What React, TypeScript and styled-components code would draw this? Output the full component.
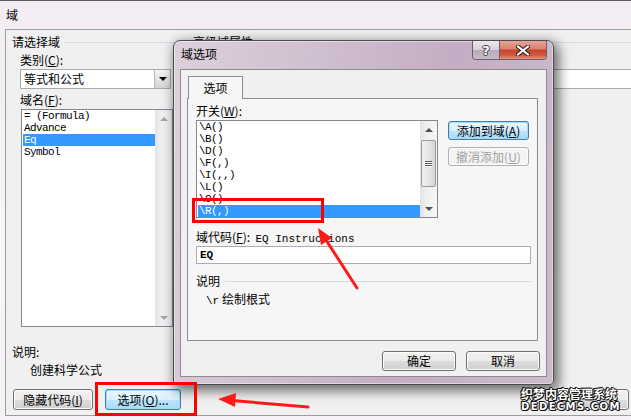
import React from "react";
import styled, { createGlobalStyle } from "styled-components";

const GlobalStyle = createGlobalStyle`
  html, body {
    margin: 0;
    padding: 0;
  }
  body {
    background: #f6eff5;
    font-family: "Noto Sans CJK SC", "Liberation Sans", sans-serif;
    font-size: 12px;
    color: #000;
  }
`;

const Screen = styled.div`
  position: relative;
  width: 631px;
  height: 420px;
  overflow: hidden;
  box-sizing: border-box;
  border-top: 1px solid #5e5e5e;
  background: linear-gradient(180deg, #f3ecf2 0%, #faf5f9 60%, #f7f0f6 100%);
`;

const MainTitle = styled.div`
  height: 28px;
  display: flex;
  align-items: center;
  padding-left: 6px;
  line-height: 14px;
`;

const MainClient = styled.div`
  margin-left: 5px;
  width: 625px;
  height: 385px;
  border: 1px solid #9d9d9d;
  border-right: none;
  background: #f0f0f0;
  display: flex;
  flex-direction: column;
`;

const Columns = styled.div`
  display: flex;
`;

const LeftColumn = styled.div`
  width: 181px;
  box-sizing: border-box;
  padding: 5px 0 0 6px;
  display: flex;
  flex-direction: column;
  align-items: flex-start;
`;

const RightColumn = styled.div`
  flex: 1;
  padding: 5px 0 0 6px;
  display: flex;
  flex-direction: column;
`;

const GroupHeading = styled.div<{ $trail?: number }>`
  align-self: stretch;
  display: flex;
  align-items: center;
  gap: 5px;
  height: 14px;
  line-height: 14px;
  margin-right: ${(p) => p.$trail ?? 0}px;
  white-space: nowrap;
`;

const Rule = styled.span`
  flex: 1;
  height: 1px;
  background: #d0dde6;
`;

const FieldLabel = styled.div`
  margin: 4px 0 0 8px;
  height: 14px;
  line-height: 14px;
`;

const Combo = styled.div`
  margin: 2px 0 0 8px;
  width: 151px;
  height: 20px;
  box-sizing: border-box;
  border: 1px solid #a7abb2;
  background: #fff;
  display: flex;
`;

const ComboText = styled.div`
  flex: 1;
  padding-left: 3px;
  line-height: 18px;
`;

const DropButton = styled.div`
  width: 15px;
  border-left: 1px solid #b5b8bd;
  background: linear-gradient(180deg, #f3f3f3 0%, #e4e4e4 50%, #d4d4d4 100%);
  display: flex;
  align-items: center;
  justify-content: center;
`;

const Triangle = styled.span<{ $dir: "up" | "down"; $color: string; $size?: number }>`
  width: 0;
  height: 0;
  border-left: ${(p) => p.$size ?? 4}px solid transparent;
  border-right: ${(p) => p.$size ?? 4}px solid transparent;
  ${(p) =>
    p.$dir === "up"
      ? `border-bottom: ${p.$size ?? 4}px solid ${p.$color};`
      : `border-top: ${p.$size ?? 4}px solid ${p.$color};`}
`;

const ListBox = styled.div<{ $w: number; $h: number; $left?: number }>`
  margin: 2px 0 0 ${(p) => p.$left ?? 0}px;
  width: ${(p) => p.$w}px;
  height: ${(p) => p.$h}px;
  box-sizing: border-box;
  border: 1px solid #828790;
  background: #fff;
  display: flex;
`;

const ListItems = styled.div`
  flex: 1;
  padding-left: 1px;
  overflow: hidden;
`;

const ListItem = styled.div<{ $selected?: boolean }>`
  height: 12px;
  line-height: 12px;
  padding-left: 1px;
  font-family: "Liberation Mono", "DejaVu Sans Mono", monospace;
  font-size: 11px;
  letter-spacing: -0.6px;
  white-space: pre;
  background: ${(p) => (p.$selected ? "#3399ff" : "transparent")};
  color: ${(p) => (p.$selected ? "#fff" : "#000")};
`;

const ScrollTrack = styled.div`
  width: 17px;
  display: flex;
  flex-direction: column;
  background: linear-gradient(90deg, #e3e3e3 0%, #efefef 35%, #f6f6f6 100%);
`;

const ScrollArrow = styled.div`
  height: 17px;
  display: flex;
  align-items: center;
  justify-content: center;
`;

const ScrollMiddle = styled.div`
  flex: 1;
  display: flex;
  flex-direction: column;
  align-items: center;
`;

const Thumb = styled.div<{ $offset: number; $size: number }>`
  margin-top: ${(p) => p.$offset}px;
  width: 15px;
  height: ${(p) => p.$size}px;
  box-sizing: border-box;
  border: 1px solid #979797;
  border-radius: 2px;
  background: linear-gradient(90deg, #f2f2f2 0%, #e6e6e6 50%, #d6d6d6 100%);
  display: flex;
  flex-direction: column;
  align-items: center;
  justify-content: center;
  gap: 1px;
`;

const Grip = styled.span`
  width: 7px;
  height: 1px;
  background: #5c5c5c;
  box-shadow: 0 1px 0 #fff;
`;

const Note = styled.div<{ $top: number; $left: number }>`
  margin: ${(p) => p.$top}px 0 0 ${(p) => p.$left}px;
  height: 14px;
  line-height: 14px;
`;

const ButtonRow = styled.div`
  margin-top: 12px;
  padding: 0 2px 0 7px;
  display: flex;
  gap: 12px;
`;

const PushButton = styled.div<{ $w: number; $h?: number; $focus?: boolean; $disabled?: boolean }>`
  width: ${(p) => p.$w}px;
  height: ${(p) => p.$h ?? 21}px;
  box-sizing: border-box;
  border: 1px solid ${(p) => (p.$focus ? "#3c7fb1" : p.$disabled ? "#adb2b5" : "#707070")};
  border-radius: 3px;
  background: ${(p) =>
    p.$disabled
      ? "#f4f4f4"
      : p.$focus
      ? "linear-gradient(180deg, #eaf6fd 0%, #d9f0fc 50%, #bee6fd 51%, #a7d9f5 100%)"
      : "linear-gradient(180deg, #f2f2f2 0%, #ebebeb 50%, #dddddd 51%, #cfcfcf 100%)"};
  box-shadow: inset 0 0 0 1px ${(p) => (p.$focus ? "#a3dcfa" : "#fbfbfb")};
  color: ${(p) => (p.$disabled ? "#a0a0a0" : "#000")};
  display: flex;
  align-items: center;
  justify-content: center;
  line-height: 14px;
  white-space: nowrap;
`;

const Spacer = styled.div`
  flex: 1;
`;

const RightField = styled.div`
  margin: 20px 0 0 2px;
  height: 18px;
  border: 1px solid #abadb3;
  border-right: none;
  background: #fff;
`;

/* ---------- dialog ---------- */

const Dialog = styled.div`
  position: absolute;
  left: 173px;
  top: 39px;
  width: 381px;
  height: 345px;
  box-sizing: border-box;
  border: 1px solid #4f4a50;
  border-radius: 7px 7px 4px 4px;
  padding: 0 6px 7px 6px;
  background: linear-gradient(100deg, #ddd0dc 0%, #cfbecf 35%, #c3adc4 65%, #cdbccd 100%);
  box-shadow: 3px 4px 12px 2px rgba(0, 0, 0, 0.55), inset 0 0 0 1px rgba(255, 255, 255, 0.45);
  display: flex;
  flex-direction: column;
`;

const DialogTitle = styled.div`
  height: 28px;
  display: flex;
  align-items: flex-start;
`;

const DialogCaption = styled.span`
  padding: 6px 0 0 1px;
  line-height: 14px;
`;

const CaptionButtons = styled.div`
  margin-left: auto;
  display: flex;
  height: 18px;
  border: 1px solid #6b5f6b;
  border-top: none;
  border-radius: 0 0 4px 4px;
  overflow: hidden;
`;

const HelpButton = styled.div`
  width: 26px;
  border-right: 1px solid #6b5f6b;
  background: linear-gradient(180deg, #ece6ec 0%, #d9cfd9 50%, #b9aab9 51%, #c9bcc9 100%);
  display: flex;
  align-items: center;
  justify-content: center;
  font-family: "DejaVu Sans", sans-serif;
  font-weight: bold;
  font-size: 13px;
  color: #fff;
  text-shadow: 1px 0 0 #3d3d3d, -1px 0 0 #3d3d3d, 0 1px 0 #3d3d3d, 0 -1px 0 #3d3d3d;
`;

const CloseButton = styled.div`
  width: 46px;
  background: linear-gradient(180deg, #e8a597 0%, #d9806d 45%, #c3422b 50%, #d25a42 80%, #e29a7f 100%);
  display: flex;
  align-items: center;
  justify-content: center;
`;

const DialogClient = styled.div`
  flex: 1;
  border: 1px solid #8d8a8e;
  background: #f0f0f0;
  padding: 6px 6px 0 6px;
  display: flex;
  flex-direction: column;
`;

const TabStrip = styled.div`
  display: flex;
  padding-left: 1px;
`;

const Tab = styled.div`
  width: 55px;
  height: 23px;
  box-sizing: border-box;
  border: 1px solid #898c95;
  border-bottom: none;
  margin-bottom: -1px;
  position: relative;
  z-index: 1;
  background: #f6f6f6;
  display: flex;
  align-items: center;
  justify-content: center;
  line-height: 14px;
`;

const TabPanel = styled.div`
  width: 351px;
  height: 243px;
  box-sizing: border-box;
  border: 1px solid #898c95;
  background: #f6f6f6;
  padding: 5px 0 0 8px;
  display: flex;
  flex-direction: column;
`;

const SwitchRow = styled.div`
  margin-top: 2px;
  display: flex;
`;

const SideButtons = styled.div`
  margin-left: 10px;
  padding-top: 1px;
  display: flex;
  flex-direction: column;
  gap: 7px;
`;

const CodeLabel = styled.div`
  margin-top: 12px;
  height: 14px;
  line-height: 14px;
  white-space: pre;
`;

const Mono = styled.span`
  font-family: "Liberation Mono", "DejaVu Sans Mono", monospace;
  font-size: 11px;
`;

const CodeInput = styled.div`
  margin-top: 2px;
  width: 335px;
  height: 18px;
  box-sizing: border-box;
  border: 1px solid #abadb3;
  background: #fff;
  padding-left: 3px;
  line-height: 16px;
  font-family: "Liberation Mono", "DejaVu Sans Mono", monospace;
  font-size: 11px;
  font-weight: bold;
`;

const DialogButtons = styled.div`
  margin-top: 10px;
  display: flex;
  justify-content: flex-end;
  gap: 10px;
`;

/* ---------- overlays ---------- */

const Annotations = styled.svg`
  position: absolute;
  left: 0;
  top: 0;
  pointer-events: none;
`;

const Watermark = styled.div`
  position: absolute;
  left: 521px;
  top: 387px;
  display: flex;
  flex-direction: column;
  color: #fff;
  font-weight: bold;
  text-shadow: 1px 0 0 #111, -1px 0 0 #111, 0 1px 0 #111, 0 -1px 0 #111, 1px 1px 0 #111, -1px -1px 0 #111;
`;

const WatermarkTop = styled.div`
  font-size: 12px;
  line-height: 12px;
`;

const WatermarkBottom = styled.div`
  margin-top: 1px;
  font-family: "DejaVu Sans", sans-serif;
  font-size: 10px;
  line-height: 11px;
  letter-spacing: 1.4px;
`;

type ScrollProps = { dim?: boolean; thumb?: { offset: number; size: number } };

const ScrollBar: React.FC<ScrollProps> = ({ dim, thumb }) => {
  const c = dim ? "#a6a6a6" : "#505050";
  return (
    <ScrollTrack>
      <ScrollArrow>
        <Triangle $dir="up" $color={c} $size={4} />
      </ScrollArrow>
      <ScrollMiddle>
        {thumb && (
          <Thumb $offset={thumb.offset} $size={thumb.size}>
            <Grip />
            <Grip />
            <Grip />
          </Thumb>
        )}
      </ScrollMiddle>
      <ScrollArrow>
        <Triangle $dir="down" $color={c} $size={4} />
      </ScrollArrow>
    </ScrollTrack>
  );
};

const fieldNames = ["= (Formula)", "Advance", "Eq", "Symbol"];
const switches = ["\\A()", "\\B()", "\\D()", "\\F(,)", "\\I(,,)", "\\L()", "\\O()", "\\R(,)"];

export default function App() {
  return (
    <>
      <GlobalStyle />
      <Screen>
        <MainTitle>域</MainTitle>
        <MainClient>
          <Columns>
            <LeftColumn>
              <GroupHeading $trail={6}>
                请选择域
                <Rule />
              </GroupHeading>
              <FieldLabel>
                类别(<u>C</u>):
              </FieldLabel>
              <Combo>
                <ComboText>等式和公式</ComboText>
                <DropButton>
                  <Triangle $dir="down" $color="#000" $size={4} />
                </DropButton>
              </Combo>
              <FieldLabel>
                域名(<u>F</u>):
              </FieldLabel>
              <ListBox $w={152} $h={218} $left={9}>
                <ListItems>
                  {fieldNames.map((n) => (
                    <ListItem key={n} $selected={n === "Eq"}>
                      {n}
                    </ListItem>
                  ))}
                </ListItems>
                <ScrollBar dim />
              </ListBox>
            </LeftColumn>
            <RightColumn>
              <GroupHeading>
                高级域属性
                <Rule />
              </GroupHeading>
              <RightField />
            </RightColumn>
          </Columns>
          <Note $top={18} $left={6}>
            说明:
          </Note>
          <Note $top={4} $left={24}>
            创建科学公式
          </Note>
          <ButtonRow>
            <PushButton $w={80}>
              隐藏代码(<u>I</u>)
            </PushButton>
            <PushButton $w={76} $focus>
              选项(<u>O</u>)...
            </PushButton>
            <Spacer />
            <PushButton $w={81} />
          </ButtonRow>
        </MainClient>

        <Dialog>
          <DialogTitle>
            <DialogCaption>域选项</DialogCaption>
            <CaptionButtons>
              <HelpButton>?</HelpButton>
              <CloseButton>
                <svg width="14" height="11" viewBox="0 0 14 11">
                  <path d="M2 1.5 L12 9.5 M12 1.5 L2 9.5" stroke="#3a2a28" strokeWidth="4.2" strokeLinecap="round" />
                  <path d="M2 1.5 L12 9.5 M12 1.5 L2 9.5" stroke="#fff" strokeWidth="2.2" strokeLinecap="round" />
                </svg>
              </CloseButton>
            </CaptionButtons>
          </DialogTitle>
          <DialogClient>
            <TabStrip>
              <Tab>选项</Tab>
            </TabStrip>
            <TabPanel>
              <FieldLabel style={{ margin: 0 }}>
                开关(<u>W</u>):
              </FieldLabel>
              <SwitchRow>
                <ListBox $w={242} $h={98} style={{ marginTop: 0 }}>
                  <ListItems>
                    {switches.map((s) => (
                      <ListItem key={s} $selected={s === "\\R(,)"}>
                        {s}
                      </ListItem>
                    ))}
                  </ListItems>
                  <ScrollBar thumb={{ offset: 2, size: 47 }} />
                </ListBox>
                <SideButtons>
                  <PushButton $w={81} $h={19} $focus>
                    添加到域(<u>A</u>)
                  </PushButton>
                  <PushButton $w={81} $h={19} $disabled>
                    撤消添加(<u>U</u>)
                  </PushButton>
                </SideButtons>
              </SwitchRow>
              <CodeLabel>
                域代码(<u>F</u>):  <Mono>EQ Instructions</Mono>
              </CodeLabel>
              <CodeInput>EQ</CodeInput>
              <GroupHeading style={{ marginTop: 10, width: 335 }}>
                说明
                <Rule />
              </GroupHeading>
              <Note $top={4} $left={10}>
                <Mono>\r</Mono> 绘制根式
              </Note>
            </TabPanel>
            <DialogButtons>
              <PushButton $w={74} $h={20}>
                确定
              </PushButton>
              <PushButton $w={74} $h={20}>
                取消
              </PushButton>
            </DialogButtons>
          </DialogClient>
        </Dialog>

        <Annotations width="631" height="420" viewBox="0 0 631 420">
          <rect x="193.5" y="198.5" width="129" height="22" fill="none" stroke="#ff0000" strokeWidth="3" />
          <rect x="96.5" y="382.5" width="99" height="31" fill="none" stroke="#ff0000" strokeWidth="3" />
          <line x1="357" y1="287" x2="326" y2="239" stroke="#ff1a1a" strokeWidth="3" strokeLinecap="round" />
          <polygon points="318,227 332,237 321,244" fill="#ff1a1a" />
          <line x1="308" y1="406" x2="232" y2="399.5" stroke="#ff1a1a" strokeWidth="3" strokeLinecap="round" />
          <polygon points="218,398 236,392 235,406" fill="#ff1a1a" />
        </Annotations>

        <Watermark>
          <WatermarkTop>织梦内容管理系统</WatermarkTop>
          <WatermarkBottom>DEDECMS.COM</WatermarkBottom>
        </Watermark>
      </Screen>
    </>
  );
}
